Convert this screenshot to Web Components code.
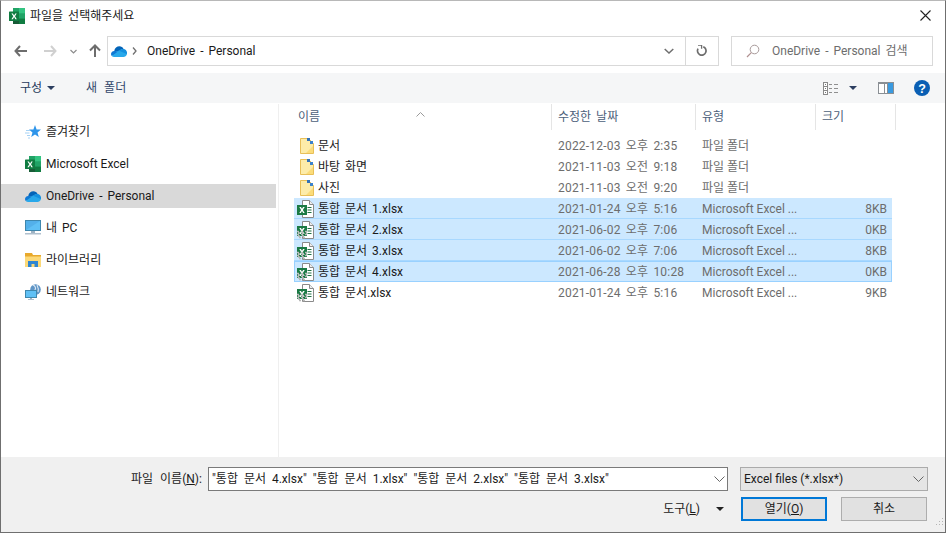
<!DOCTYPE html>
<html lang="ko"><head><meta charset="utf-8"><style>
html,body{margin:0;height:100%;background:#fff;overflow:hidden}
body{font:12px/16px Roboto,"Noto Sans CJK KR",sans-serif;word-spacing:2px;color:#1a1a1a}
</style></head><body>
<file-dialog></file-dialog>
<script>
const page=`<path d="M5.500 .500h7l4 4v13h-11z" fill="#fff" stroke="#8a8a8a"/><path d="M12.500 .500v4h4" fill="#eee" stroke="#8a8a8a"/><path d="M10.500 7.500h4M10.500 10h4M10.500 12.500h4" stroke="#1f7244" stroke-width="1.200"/><rect x="0" y="5" width="10" height="10" fill="#1a7a44"/><path d="M2.300 7h1.600l1.100 1.800L6.100 7h1.600L5.900 10l1.800 3H6.100L5 11.100 3.900 13H2.300l1.800-3z" fill="#fff"/>`;
const ICONS={
excel:`<svg viewBox="0 0 16 16" width="16" height="16"><rect x="4" y="0" width="12" height="16" fill="#21a366"/><rect x="10" y="0" width="6" height="5.300" fill="#33c481"/><rect x="4" y="5.300" width="6" height="5.300" fill="#107c41"/><rect x="4" y="10.600" width="6" height="5.400" fill="#185c37"/><rect x="10" y="10.600" width="6" height="5.400" fill="#107c41"/><rect x="0" y="3.500" width="10" height="9.500" rx=".6" fill="#107c41"/><path d="M2.400 5.400h1.500l1.200 2 1.200-2h1.400L6 8.200l1.800 3H6.300L5.100 9.100 3.900 11.200H2.400l1.900-3z" fill="#fff"/></svg>`,
cloud:`<svg viewBox="0 0 16 11" width="16" height="11"><path d="M3.200 5.200C3.600 2 6 .2 8.400.2c1.900 0 3.400 1 4.200 2.700-.4 0-.8.100-1.200.2L6.300 5.800 4.500 5z" fill="#0364b8"/><path d="M3.300 5c-2 .1-3.300 1.600-3.300 3 0 .8.300 1.400.7 1.900l4.800-2 1-2.300-1.500-.7z" fill="#0f78d4"/><path d="M12.600 3c-2-.2-3.300.5-4.900 1.600L5.500 6l7.400 3.800L16 8c.1-.3.100-.6.100-.9 0-2.200-1.500-3.900-3.500-4.100z" fill="#1490df"/><path d="M.7 9.900c.6.700 1.500 1.100 2.500 1.100h9.300c1.500 0 2.800-.7 3.400-2.900L8 4.800z" fill="#28a8ea"/></svg>`,
star:`<svg viewBox="0 0 16 16" width="16" height="16"><path d="M10 1l1.600 4.400 4.400.2-3.500 2.900 1.300 4.500-3.800-2.500-3.800 2.500 1.300-4.500L4 5.600l4.400-.2z" fill="#2f95ea"/><path d="M1 6.500h4M0 9h4.500M2 11.500h3M3 14h2" stroke="#a6d2f5" stroke-width="1"/></svg>`,
pc:`<svg viewBox="0 0 16 16" width="16" height="16"><rect x=".5" y=".5" width="15" height="10" fill="#5fc0f5" stroke="#3f87ad"/><path d="M1 10V1h14z" fill="#4fa9e6" opacity=".7"/><rect x="6" y="11" width="4" height="2" fill="#9eb3c4"/><rect x="0" y="13" width="16" height="1.500" fill="#b0c0ce"/></svg>`,
library:`<svg viewBox="0 0 16 16" width="16" height="16"><path d="M0 1h7l1 2h8v12H0z" fill="#e8a92c"/><rect x="0" y="4.500" width="16" height="10.500" fill="#fcd978"/><path d="M3 9h10v6h-3.500v-3h-3v3H3z" fill="#2f86d2"/></svg>`,
network:`<svg viewBox="0 0 16 16" width="16" height="16"><circle cx="10.500" cy="5.500" r="5.300" fill="#5f95c6"/><path d="M8 1c2 1 3 3 2 5s-2 3-1 4M12 1c1 2 2 4 1 7" stroke="#dfeaf4" stroke-width="1.100" fill="none"/><rect x=".5" y="6.500" width="11" height="7" fill="#5fc0f5" stroke="#3f87ad"/><rect x="5" y="14" width="2" height="1" fill="#9eb3c4"/><rect x="3" y="15" width="6" height="1" fill="#b0c0ce"/></svg>`,
folder:`<svg viewBox="0 0 14 16" width="14" height="16"><path d="M.5 .500h8l5 5v10H.5z" fill="#fde58e" stroke="#e8bf58"/><path d="M1 1h7l5 5v9H1z" fill="#fdeca9"/><path d="M6 15L13 8v7z" fill="#fbdc7a"/><rect x="7" y="0" width="3" height="3" fill="#3372b8"/><rect x="10" y="3" width="3" height="3" fill="#3c82cc"/></svg>`,
xlsx:`<svg viewBox="0 0 17 18" width="17" height="18">${page}</svg>`,
xlsxSync:`<svg viewBox="0 0 17 18" width="17" height="18">${page}<path d="M0 10.500h2M4 10.500h2M8 10.500h2M1 12h2M5 12h2M9 12h1M0 13.500h2M4 13.500h2M8 13.500h2M1 15h2M5 15h2M2 16.500h2M6 16.500h2" stroke="#b9b9b9" stroke-width="1.500"/></svg>`,
back:`<svg viewBox="0 0 14 12" width="14" height="12"><path d="M6 1L1.500 6 6 11M1.500 6H13" fill="none" stroke="#6d6d6d" stroke-width="2"/></svg>`,
fwd:`<svg viewBox="0 0 14 12" width="14" height="12"><path d="M8 1l4.500 5L8 11M12.500 6H1" fill="none" stroke="#d0d0d0" stroke-width="2"/></svg>`,
up:`<svg viewBox="0 0 12 14" width="12" height="14"><path d="M1 6.500L6 1.500l5 5M6 1.500V13" fill="none" stroke="#6d6d6d" stroke-width="2"/></svg>`,
chev:`<svg viewBox="0 0 7 5" width="7" height="5"><path d="M.5 1l3 3 3-3" fill="none" stroke="#8c8c8c" stroke-width="1.200"/></svg>`,
chevR:`<svg viewBox="0 0 5 8" width="5" height="8"><path d="M1 .5l3 3.500-3 3.500" fill="none" stroke="#707070" stroke-width="1.300"/></svg>`,
chevD:`<svg viewBox="0 0 10 6" width="10" height="6"><path d="M.7 1l4.300 4 4.300-4" fill="none" stroke="#6f6f6f" stroke-width="1.500"/></svg>`,
thin:`<svg viewBox="0 0 11 6" width="11" height="6"><path d="M.5 .500l5 5 5-5" fill="none" stroke="#666" stroke-width="1"/></svg>`,
refresh:`<svg viewBox="0 0 12 12" width="12" height="12"><path d="M3.200 2.500a4.300 4.300 0 1 0 5.600 0" transform="rotate(-20 6 6.500)" fill="none" stroke="#6d6d6d" stroke-width="1.700"/><path d="M2 .2h3.600v3.600" fill="none" stroke="#6d6d6d" stroke-width="1.300"/></svg>`,
search:`<svg viewBox="0 0 14 14" width="14" height="14"><circle cx="8.500" cy="5.500" r="4.300" fill="none" stroke="#a89a9a"/><path d="M5.300 8.700L1 13" stroke="#b09090" stroke-width="1.200"/></svg>`,
close:`<svg viewBox="0 0 11 11" width="11" height="11"><path d="M.5 .500l10 10M10.500 .500l-10 10" stroke="#222" stroke-width="1.100"/></svg>`,
tri:`<svg viewBox="0 0 8 4" width="8" height="4"><path d="M0 0h8L4 4z" fill="#2c3e60"/></svg>`,
triK:`<svg viewBox="0 0 8 4" width="8" height="4"><path d="M0 0h8L4 4z" fill="#222"/></svg>`,
views:`<svg viewBox="0 0 16 13" width="16" height="13"><rect x=".5" y=".5" width="4" height="12" fill="#fff" stroke="#8a8a8a"/><path d="M.5 4.500h4M.5 8.500h4" stroke="#8a8a8a"/><rect x="2" y="2" width="1" height="1" fill="#777"/><rect x="2" y="6" width="1" height="1" fill="#777"/><rect x="2" y="10" width="1" height="1" fill="#777"/><path d="M6 2.500h3M11 2.500h4M6 6.500h3M11 6.500h4M6 10.500h3M11 10.500h4" stroke="#8f8f8f"/></svg>`,
pane:`<svg viewBox="0 0 16 12" width="16" height="12"><rect width="16" height="12" fill="#8a8f94"/><rect x="1" y="2" width="5" height="9" fill="#fff"/><rect x="7" y="2" width="2" height="9" fill="#fff"/><rect x="10" y="1" width="5" height="10" fill="#3a9ae0"/></svg>`,
help:`<svg viewBox="0 0 16 16" width="16" height="16"><circle cx="8" cy="8" r="8" fill="#0a5fb4"/><text x="8" y="12.500" text-anchor="middle" font-family="Liberation Sans" font-weight="700" font-size="12.500" fill="#fff">?</text></svg>`
};
function def(name,css,html){
  customElements.define(name,class extends HTMLElement{
    constructor(){super();const r=this.attachShadow({mode:'open'});
      r.innerHTML=`<style>${css}</style>`+(typeof html==='function'?html(this):html);}
  });
}
customElements.define('ui-icon',class extends HTMLElement{
  connectedCallback(){
    if(!this.shadowRoot)this.attachShadow({mode:'open'});
    this.shadowRoot.innerHTML=`<style>:host{display:inline-flex;flex:none;line-height:0}</style>`+(ICONS[this.getAttribute('name')]||'');
  }
});
def('title-bar',`:host{display:flex;align-items:center;height:29px;padding:0 14px 0 8px;gap:5px;flex:none}
span{flex:1;font-size:12px}`,
`<ui-icon name="excel"></ui-icon><span>파일을 선택해주세요</span><ui-icon name="close"></ui-icon>`);
def('nav-bar',`:host{display:flex;align-items:center;height:30px;margin-top:6px;padding:0 12px 0 13px;flex:none}
.n{display:flex;align-items:center;width:93px;flex:none}
.n ui-icon:nth-child(1){margin-right:15px}.n ui-icon:nth-child(2){margin-right:13px}.n ui-icon:nth-child(3){margin-right:12px}
.addr{display:flex;align-items:center;height:28px;border:1px solid #d9d9d9;width:610px;flex:none;background:#fff}
.addr .p{display:flex;align-items:center;flex:1;padding-left:3px;gap:5px;font-size:12px}
.addr .p span{margin-left:5px;padding-bottom:1px}
.dd{width:32px;display:flex;justify-content:center;align-items:center}
.rf{width:32px;height:28px;border-left:1px solid #d9d9d9;display:flex;justify-content:center;align-items:center}
.search{display:flex;align-items:center;height:28px;border:1px solid #d9d9d9;margin-left:12px;flex:1;padding-left:14px;color:#6d6d6d;gap:12px}
.search span{padding-bottom:1px}`,
`<div class="n"><ui-icon name="back"></ui-icon><ui-icon name="fwd"></ui-icon><ui-icon name="chev"></ui-icon><ui-icon name="up"></ui-icon></div>
<div class="addr"><div class="p"><ui-icon name="cloud"></ui-icon><ui-icon name="chevR"></ui-icon><span>OneDrive - Personal</span></div><div class="dd"><ui-icon name="chevD"></ui-icon></div><div class="rf"><ui-icon name="refresh"></ui-icon></div></div>
<div class="search"><ui-icon name="search"></ui-icon><span>OneDrive - Personal 검색</span></div>`);
def('tool-bar',`:host{display:flex;align-items:center;height:30px;margin-top:7px;background:#f5f6f7;padding:0 15px 0 19px;flex:none;color:#1e395b}
.a{display:flex;align-items:center;gap:5px}.b{margin-left:31px;flex:1;color:#33486b;word-spacing:4px}
span,.b{padding-bottom:1px}
.v{display:flex;align-items:center}.v .t{margin-left:10px}.v .pane{margin-left:21px}.v .help{margin-left:20px}`,
`<div class="a"><span>구성</span><ui-icon name="tri"></ui-icon></div><div class="b">새 폴더</div>
<div class="v"><ui-icon name="views"></ui-icon><ui-icon class="t" name="tri"></ui-icon><ui-icon class="pane" name="pane"></ui-icon><ui-icon class="help" name="help"></ui-icon></div>`);
def('nav-item',`:host{display:flex;align-items:center;height:24px;padding-left:24px;gap:5px;margin:0 2px 8px 0}
:host([selected]){background:#d9d9d9}
:host([tight]){word-spacing:0}
.t{padding-bottom:1px}`,
`<slot name="i"></slot><span class="t"><slot></slot></span>`);
def('side-nav',`:host{display:block;width:277px;flex:none;border-right:1px solid #efefef;padding-top:16px}`,`<slot></slot>`);
def('list-header',`:host{display:grid;grid-template-columns:262px 144px 120px 80px;height:26px;color:#4c607a;flex:none}
div{border-right:1px solid #e5e5e5;padding:0 0 0 6px;display:flex;align-items:center;height:26px}
.name{padding-left:8px}`,
`<div class="name">이름</div><div>수정한 날짜</div><div>유형</div><div>크기</div>`);
def('file-row',`:host{display:grid;grid-template-columns:257px 144px 120px 77px;height:21px;align-items:center;width:598px;box-sizing:border-box;color:#6d6d6d}
:host([selected]){background:#cce8ff;box-shadow:inset 0 -1px 0 #a8d8ff}
:host([focused]){box-shadow:inset 0 0 0 1px #99d1ff}
.n{display:flex;align-items:center;gap:4px;color:#1a1a1a;padding-left:3px}
.n.f{padding-left:6px;gap:4px}
.d{padding-left:7px;letter-spacing:.2px}.t{padding-left:7px;word-spacing:0}.s{text-align:right;padding-right:5px}`,
h=>`<div class="n ${h.getAttribute('icon')==='folder'?'f':''}"><ui-icon name="${h.getAttribute('icon')}"></ui-icon><span>${h.getAttribute('n')}</span></div><div class="d">${h.getAttribute('d')}</div><div class="t">${h.getAttribute('t')}</div><div class="s">${h.getAttribute('s')||''}</div>`);
def('file-list',`:host{display:flex;flex-direction:column;flex:1;padding-left:15px;position:relative;min-width:0}
.rows{margin-top:5px}
.sort{position:absolute;left:137px;top:1px}
list-header{margin-left:-4px}`,
`<list-header></list-header><div class="sort"><svg width="9" height="5" viewBox="0 0 9 5"><path d="M.5 4.500l4-4 4 4" fill="none" stroke="#9a9a9a"/></svg></div><div class="rows"><slot></slot></div>`);
def('name-row',`:host{display:flex;height:30px;align-items:flex-start;flex:none}
label{margin-left:130px;width:77px;padding-top:4px;white-space:nowrap;word-spacing:4px}u{text-decoration:underline}
.i{width:515px;height:22px;border:1px solid #7a7a7a;background:#fff;display:flex;align-items:center;padding-left:3px;overflow:hidden;white-space:nowrap;word-spacing:3px}
.i span{flex:1;overflow:hidden}.i ui-icon{margin:0 2px 0 6px}
.f{margin-left:12px;border:1px solid #ababab;background:#e5e5e5;display:flex;align-items:center;padding:0 3px;justify-content:space-between;box-sizing:border-box;width:188px;height:24px;word-spacing:0}`,
`<label>파일 이름(<u>N</u>):</label><div class="i"><span>"통합 문서 4.xlsx" "통합 문서 1.xlsx" "통합 문서 2.xlsx" "통합 문서 3.xlsx"</span><ui-icon name="thin"></ui-icon></div><div class="f"><span>Excel files (*.xlsx*)</span><ui-icon name="thin"></ui-icon></div>`);
def('button-row',`:host{display:flex;height:24px;align-items:center;justify-content:flex-end;padding-right:18px;flex:none}
.t{display:flex;align-items:center;gap:16px;margin-right:17px}u{text-decoration:underline}
.btn{width:86px;height:24px;box-sizing:border-box;background:#e1e1e1;border:1px solid #adadad;display:flex;align-items:center;justify-content:center}
.p{border:2px solid #0078d7;margin-right:14px}`,
`<div class="t"><span>도구(<u>L</u>)</span><ui-icon name="triK"></ui-icon></div><div class="btn p"><span>열기(<u>O</u>)</span></div><div class="btn"><span>취소</span></div>`);
def('dialog-footer',`:host{display:block;height:75px;background:#f0f0f0;padding-top:10px;box-sizing:border-box;flex:none;position:relative}
.grip{position:absolute;right:1px;bottom:1px}`,
`<name-row></name-row><button-row></button-row><div class="grip"><svg width="10" height="10" viewBox="0 0 10 10"><path d="M8 1h1v1H8zM5 4h1v1H5zM8 4h1v1H8zM2 7h1v1H2zM5 7h1v1H5zM8 7h1v1H8z" fill="#b5b5b5"/></svg></div>`);
def('file-dialog',`:host{display:flex;flex-direction:column;width:946px;height:533px;box-sizing:border-box;border:1px solid #6f6f6f;border-top-color:#b8b8b8;background:#fff;overflow:hidden}
.main{display:flex;flex:1;min-height:0;padding-top:1px}`,
`<title-bar></title-bar><nav-bar></nav-bar><tool-bar></tool-bar>
<div class="main"><side-nav>${[['star','즐겨찾기'],['excel','Microsoft Excel',0,1],['cloud','OneDrive - Personal',1],['pc','내 PC'],['library','라이브러리'],['network','네트워크']].map(([i,t,s,w])=>`<nav-item ${s?'selected':''} ${w?'tight':''}><ui-icon slot="i" name="${i}"></ui-icon>${t}</nav-item>`).join('')}</side-nav>
<file-list>${[
['folder','문서','2022-12-03 오후 2:35','파일 폴더',''],
['folder','바탕 화면','2021-11-03 오전 9:18','파일 폴더',''],
['folder','사진','2021-11-03 오전 9:20','파일 폴더',''],
['xlsx','통합 문서 1.xlsx','2021-01-24 오후 5:16','Microsoft Excel ...','8KB','selected'],
['xlsxSync','통합 문서 2.xlsx','2021-06-02 오후 7:06','Microsoft Excel ...','0KB','selected'],
['xlsxSync','통합 문서 3.xlsx','2021-06-02 오후 7:06','Microsoft Excel ...','8KB','selected'],
['xlsxSync','통합 문서 4.xlsx','2021-06-28 오후 10:28','Microsoft Excel ...','0KB','selected focused'],
['xlsxSync','통합 문서.xlsx','2021-01-24 오후 5:16','Microsoft Excel ...','9KB','']
].map(r=>`<file-row icon="${r[0]}" n="${r[1]}" d="${r[2]}" t="${r[3]}" s="${r[4]}" ${r[5]||''}></file-row>`).join('')}</file-list></div>
<dialog-footer></dialog-footer>`);
</script></body></html>
